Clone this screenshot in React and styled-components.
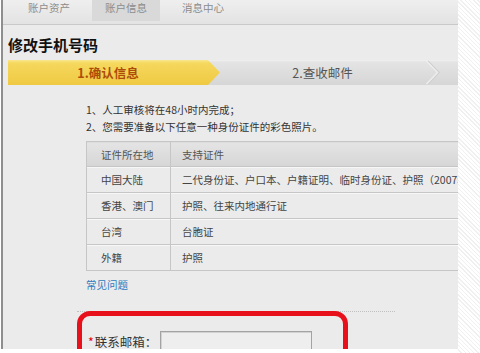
import React from 'react';
import styled, { createGlobalStyle } from 'styled-components';

const Global = createGlobalStyle`
  html, body { margin: 0; padding: 0; background: #fff; }
  body { font-family: "Noto Sans CJK SC", "Noto Sans", sans-serif; }
  * { box-sizing: border-box; }
`;

const Screen = styled.div`
  display: flex;
  width: 480px;
  height: 353px;
  overflow: hidden;
  background: #fff;
`;

const Panel = styled.div`
  flex-shrink: 0;
  width: 457px;
  height: 349px;
  margin-left: 1px;
  border-left: 2px solid #8e8e8e;
  background: #ebebeb;
  overflow: hidden;
`;

const Hatch = styled.div`
  flex: 1;
  background: repeating-linear-gradient(45deg, #ffffff 0 2px, #f0f0f0 2px 3px);
`;

const TabBar = styled.div`
  display: flex;
  gap: 9px;
  height: 25px;
  padding-left: 12px;
  background: linear-gradient(#efefef, #e3e3e3);
  border-bottom: 1px solid #c9c9c9;
`;

const Tab = styled.div`
  width: 68px;
  height: ${p => (p.$active ? '21px' : '17px')};
  line-height: 16px;
  text-align: center;
  font-size: 10.5px;
  color: #8c8c8c;
  background: ${p => (p.$active ? '#d9d9d9' : 'transparent')};
`;

const Body = styled.div`
  padding-left: 5px;
`;

const Title = styled.h1`
  margin: 10px 0 5px 0;
  font-size: 15px;
  line-height: 20px;
  font-weight: 700;
  color: #111;
`;

const StepBar = styled.div`
  display: flex;
  height: 25px;
  background: linear-gradient(#f1f1f1 0, #e4e4e4 2px, #d6d6d6 100%);
`;

const Step = styled.div`
  flex-shrink: 0;
  width: ${p => p.$w}px;
  display: flex;
  align-items: center;
  justify-content: center;
  font-size: 12.5px;
  font-weight: ${p => (p.$active ? 700 : 400)};
  color: ${p => (p.$active ? '#ad4c08' : '#555')};
  ${p =>
    p.$active &&
    `
    padding-right: 12px;
    background: linear-gradient(#fae890 0, #f5d85e 3px, #efc942 100%);
    clip-path: polygon(0 0, calc(100% - 12px) 0, 100% 50%, calc(100% - 12px) 100%, 0 100%);
  `}
`;

const Chevron = styled.svg`
  flex-shrink: 0;
  display: block;
`;

const Notes = styled.div`
  margin: 16px 0 6px 78px;
  font-size: 10.5px;
  line-height: 17px;
  color: #333;
`;

const Table = styled.table`
  margin-left: 78px;
  width: 420px;
  border-collapse: collapse;
  font-size: 10.5px;
  color: #444;
  table-layout: fixed;
`;

const Th = styled.th`
  height: 25px;
  padding: 0 0 0 ${p => p.$pl}px;
  width: ${p => (p.$w ? `${p.$w}px` : 'auto')};
  text-align: left;
  font-weight: 400;
  color: #555;
  background: linear-gradient(#e4e4e4, #d6d6d6);
  border: 1px solid #c6c6c6;
  white-space: nowrap;
  overflow: hidden;
`;

const Td = styled.td`
  height: 26px;
  padding: 0 0 0 ${p => p.$pl}px;
  border: 1px solid #c6c6c6;
  box-shadow: inset 0 1px 0 #f7f7f7;
  white-space: nowrap;
  overflow: hidden;
`;

const Faq = styled.a`
  display: block;
  margin: 7px 0 0 78px;
  font-size: 10.5px;
  line-height: 14px;
  color: #2d7cc1;
  text-decoration: none;
`;

const Form = styled.div`
  position: relative;
  margin: 19px 0 0 69px;
  width: 318px;
  height: 60px;
  border-top: 1px dotted #c0c0c0;
`;

const Highlight = styled.div`
  position: absolute;
  left: 0;
  top: -1px;
  width: 271px;
  height: 70px;
  border: 5px solid #e8101a;
  border-radius: 13px;
  pointer-events: none;
`;

const Field = styled.div`
  display: flex;
  align-items: center;
  padding: 19px 0 0 11px;
`;

const Label = styled.label`
  width: 72px;
  font-size: 12.5px;
  line-height: 16px;
  color: #333;
  white-space: nowrap;
`;

const Star = styled.span`
  color: #e60012;
  margin-right: 1px;
`;

const Input = styled.div`
  width: 152px;
  height: 22px;
  border: 1px solid #a3a3a3;
  background: #eeeeee;
  box-shadow: inset 1px 1px 0 #d2d2d2;
`;

const rows = [
  ['中国大陆', '二代身份证、户口本、户籍证明、临时身份证、护照（2007年以后签发）'],
  ['香港、澳门', '护照、往来内地通行证'],
  ['台湾', '台胞证'],
  ['外籍', '护照'],
];

export default function App() {
  return (
    <>
      <Global />
      <Screen>
        <Panel>
          <TabBar>
            <Tab>账户资产</Tab>
            <Tab $active>账户信息</Tab>
            <Tab>消息中心</Tab>
          </TabBar>
          <Body>
            <Title>修改手机号码</Title>
            <StepBar>
              <Step $w={212} $active>1.确认信息</Step>
              <Step $w={205}>2.查收邮件</Step>
              <Chevron width="16" height="25" viewBox="0 0 16 25">
                <polyline points="3,1 14,12.5 3,24" fill="none" stroke="#cfcfcf" strokeWidth="1.5" />
                <polyline points="1.5,1 12.5,12.5 1.5,24" fill="none" stroke="#ededed" strokeWidth="1.5" />
              </Chevron>
            </StepBar>
            <Notes>
              <div>1、人工审核将在48小时内完成；</div>
              <div>2、您需要准备以下任意一种身份证件的彩色照片。</div>
            </Notes>
            <Table>
              <thead>
                <tr>
                  <Th $w={84} $pl={14}>证件所在地</Th>
                  <Th $pl={11}>支持证件</Th>
                </tr>
              </thead>
              <tbody>
                {rows.map(([a, b]) => (
                  <tr key={a}>
                    <Td $pl={14}>{a}</Td>
                    <Td $pl={11}>{b}</Td>
                  </tr>
                ))}
              </tbody>
            </Table>
            <Faq href="#">常见问题</Faq>
            <Form>
              <Highlight />
              <Field>
                <Label>
                  <Star>*</Star>联系邮箱：
                </Label>
                <Input />
              </Field>
            </Form>
          </Body>
        </Panel>
        <Hatch />
      </Screen>
    </>
  );
}
